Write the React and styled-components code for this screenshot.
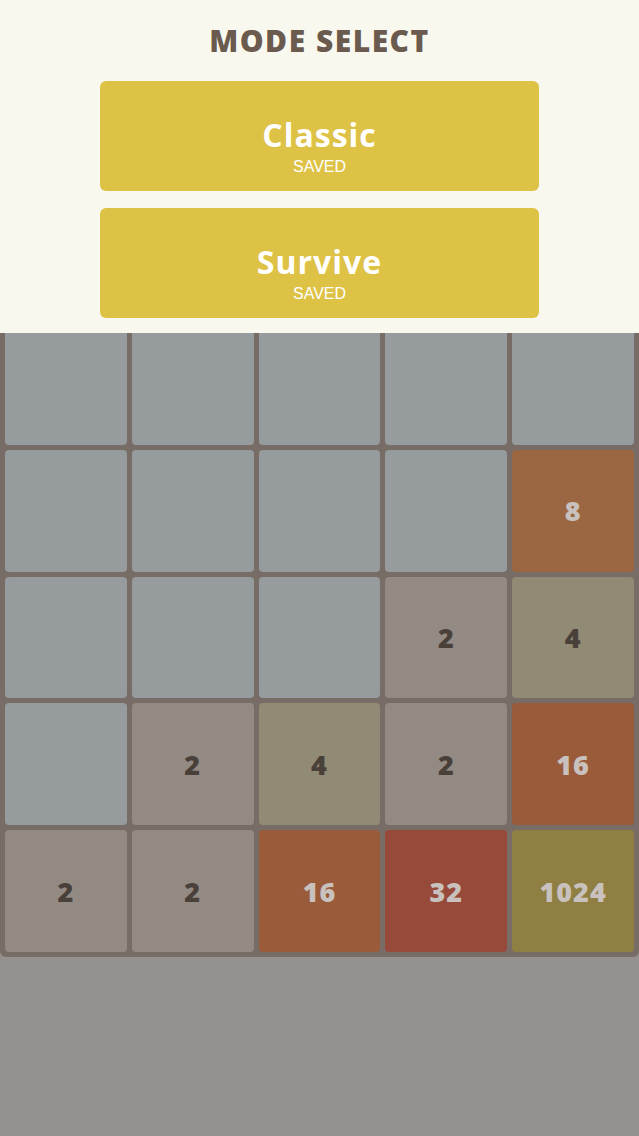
import React from "react";
import styled, { createGlobalStyle } from "styled-components";

const GlobalStyle = createGlobalStyle`
  html, body {
    margin: 0;
    padding: 0;
    background-color: #95918e;
  }
  #root {
    min-height: 1136px;
  }
`;

const Page = styled.div`
  position: relative;
  width: 639px;
  height: 1136px;
  overflow: hidden;
  padding-top: 318px;
  box-sizing: border-box;
`;

const Board = styled.div`
  width: 639px;
  height: 639px;
  box-sizing: border-box;
  padding: 5px;
  background-color: #776d66;
  border-radius: 6px;
  display: grid;
  grid-template-columns: repeat(5, 1fr);
  grid-template-rows: repeat(5, 1fr);
  gap: 5px;
`;

const tileColors = {
  0: "#969b9d",
  2: "#938a84",
  4: "#918a74",
  8: "#9b6742",
  16: "#9a5b3b",
  32: "#984a3a",
  1024: "#8f7f43",
};

const Tile = styled.div`
  border-radius: 4px;
  background-color: ${(p) => tileColors[p.$value] || "#969b9d"};
  display: flex;
  align-items: center;
  justify-content: center;
  font-family: "Open Sans", "DejaVu Sans", sans-serif;
  font-weight: 800;
  font-size: 27px;
  letter-spacing: 1px;
  color: ${(p) => (p.$value > 4 ? "#c9c1bd" : "#4a403a")};
`;

const Modal = styled.div`
  position: absolute;
  top: 0;
  left: 0;
  right: 0;
  height: 333px;
  background-color: #f9f8ef;
  display: flex;
  flex-direction: column;
  align-items: center;
  padding-top: 21px;
  box-sizing: border-box;
`;

const Title = styled.h1`
  margin: 0 0 20px;
  font-family: "Open Sans", "DejaVu Sans", sans-serif;
  font-weight: 800;
  font-size: 30px;
  line-height: 40px;
  letter-spacing: 1.5px;
  color: #6b5a4e;
`;

const ModeList = styled.div`
  display: flex;
  flex-direction: column;
  gap: 17px;
`;

const ModeButton = styled.button`
  width: 439px;
  height: 110px;
  border: none;
  border-radius: 6px;
  background-color: #dec245;
  color: #ffffff;
  display: flex;
  flex-direction: column;
  align-items: center;
  justify-content: center;
  padding: 20px 0 0;
  cursor: pointer;
`;

const ModeName = styled.span`
  font-family: "Open Sans", "DejaVu Sans", sans-serif;
  font-weight: 700;
  font-size: 32px;
  line-height: 38px;
  letter-spacing: 1px;
`;

const ModeState = styled.span`
  font-family: "Liberation Sans", Arial, sans-serif;
  font-size: 16px;
  line-height: 18px;
  margin-top: 4px;
`;

const board = [
  0, 0, 0, 0, 0,
  0, 0, 0, 0, 8,
  0, 0, 0, 2, 4,
  0, 2, 4, 2, 16,
  2, 2, 16, 32, 1024,
];

const modes = ["Classic", "Survive"];

export default function App() {
  return (
    <>
      <GlobalStyle />
      <Page>
        <Board>
          {board.map((v, i) => (
            <Tile key={i} $value={v}>
              {v > 0 ? v : ""}
            </Tile>
          ))}
        </Board>
        <Modal>
          <Title>MODE SELECT</Title>
          <ModeList>
            {modes.map((m) => (
              <ModeButton key={m}>
                <ModeName>{m}</ModeName>
                <ModeState>SAVED</ModeState>
              </ModeButton>
            ))}
          </ModeList>
        </Modal>
      </Page>
    </>
  );
}
